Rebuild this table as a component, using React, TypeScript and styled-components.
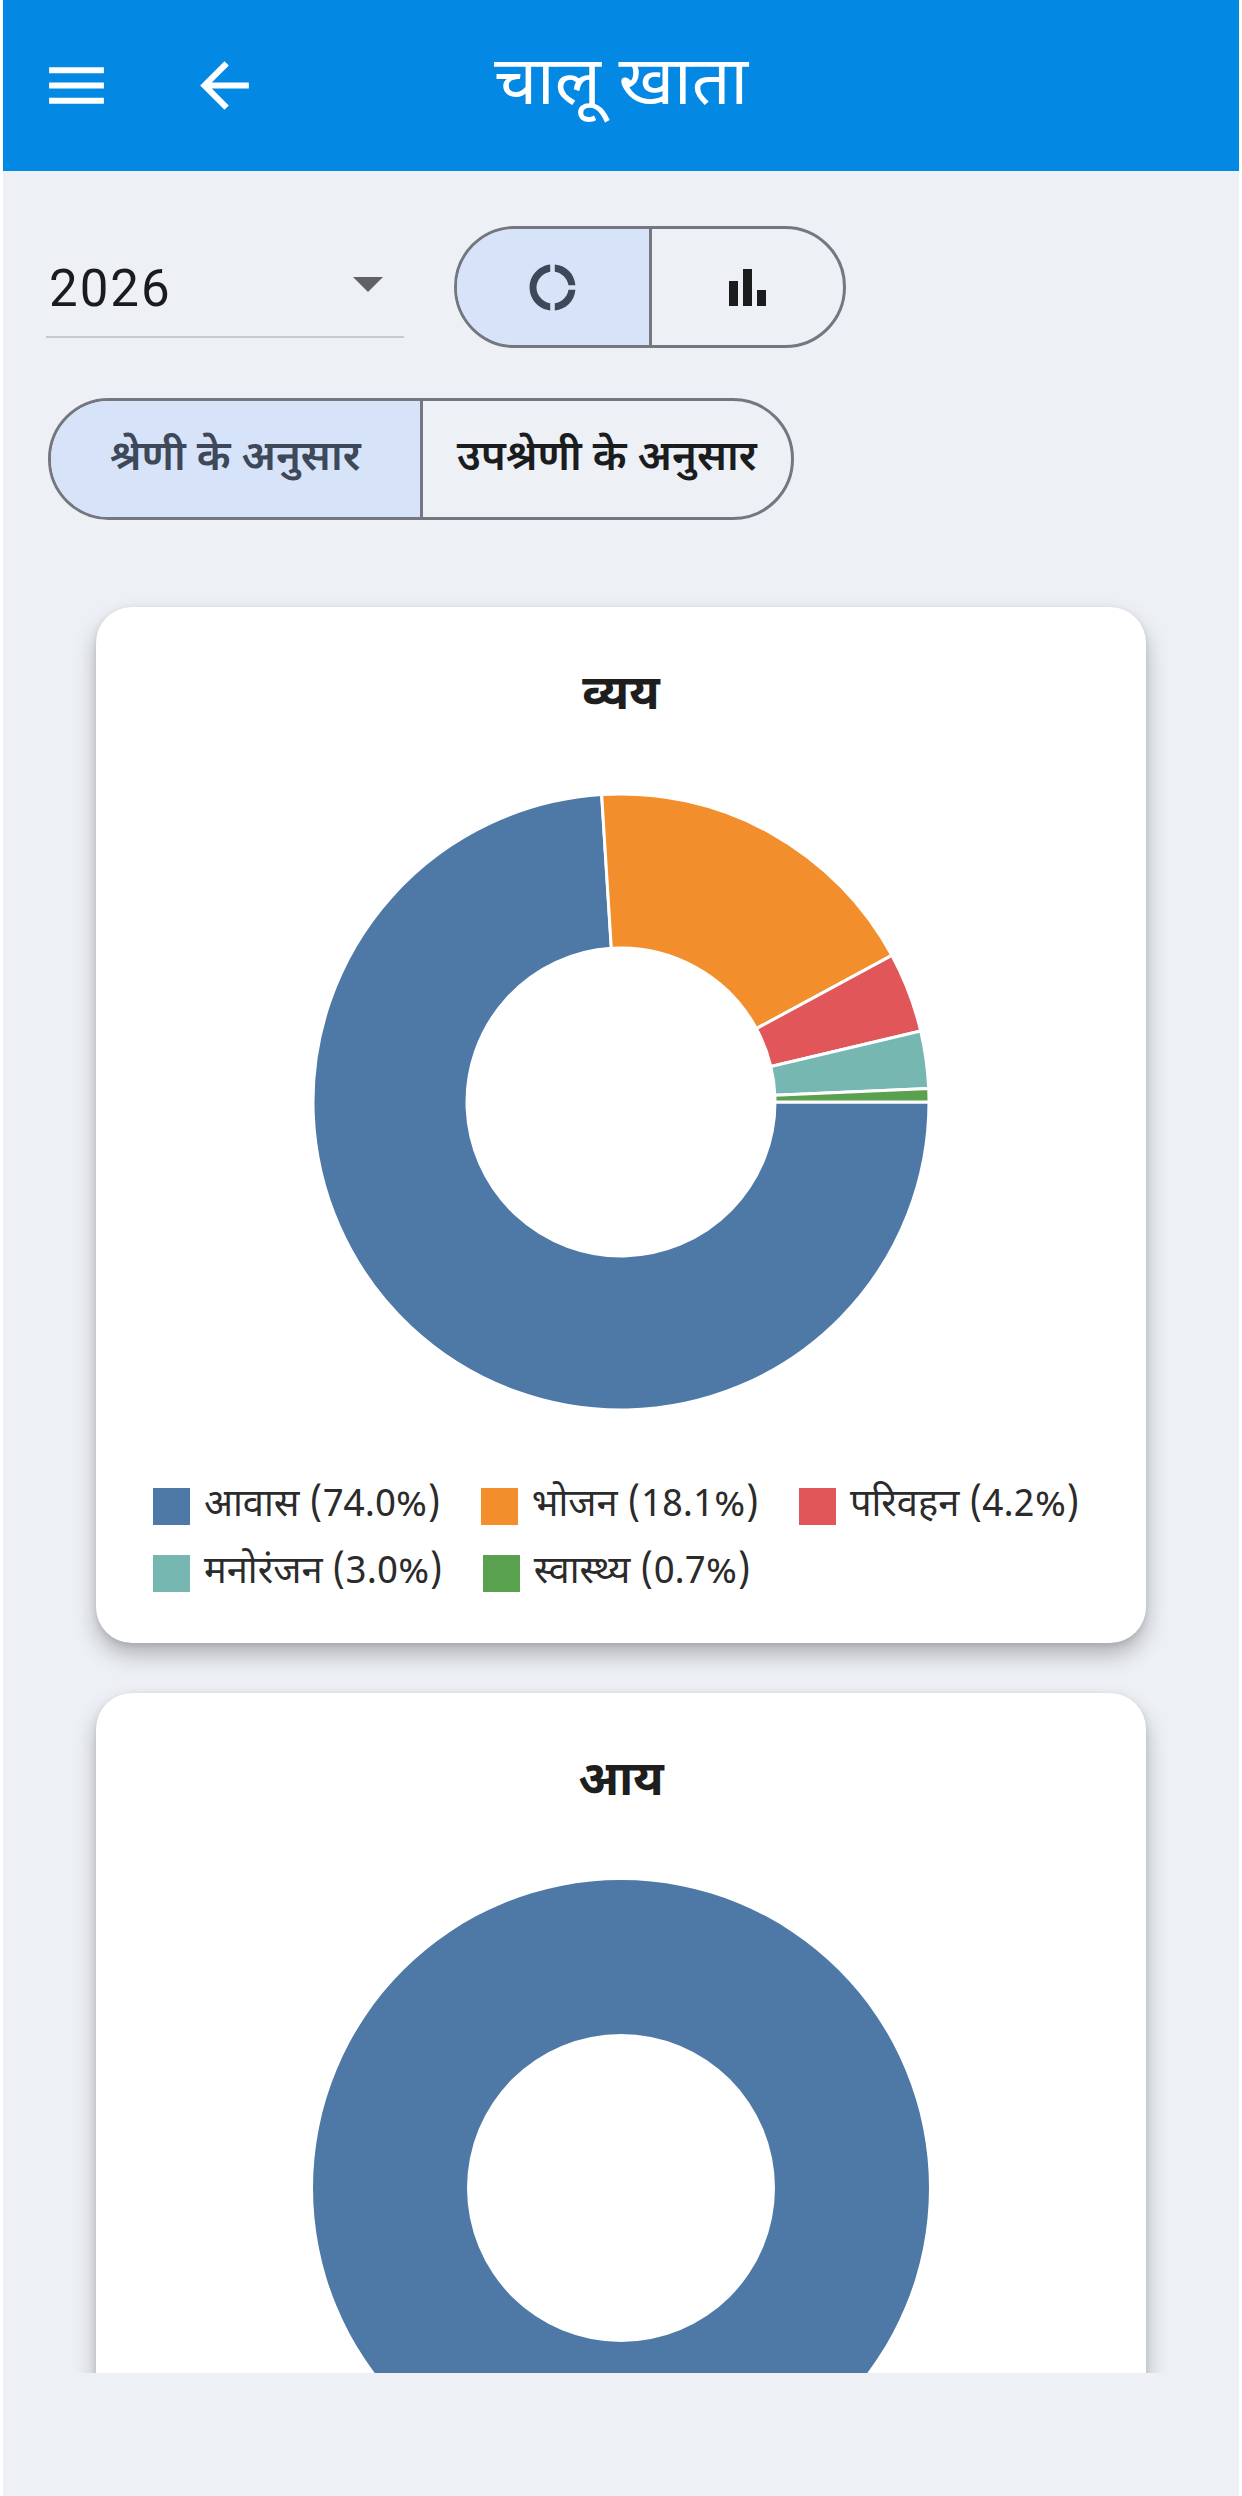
import React from "react";
import styled, { createGlobalStyle } from "styled-components";

const Global = createGlobalStyle`
  html, body { margin: 0; padding: 0; background: #ffffff; }
  * { box-sizing: border-box; }
`;

const DEVA = `"Noto Sans Devanagari", "Noto Sans", "Lohit Devanagari", "FreeSans", sans-serif`;

const Frame = styled.div`
  width: 1236px;
  height: 2496px;
  margin-left: 3px;
  background: #edf0f5;
  display: flex;
  flex-direction: column;
  overflow: hidden;
  font-family: ${DEVA};
`;

const AppBar = styled.header`
  height: 171px;
  flex: none;
  background: #0388e4;
  display: grid;
  grid-template-columns: 1fr auto 1fr;
  align-items: center;
  padding: 0 37px;
`;

const BarLeft = styled.div`
  display: flex;
  align-items: center;
  gap: 75px;
`;

const IconBox = styled.div`
  width: 73px;
  height: 73px;
  display: flex;
  align-items: center;
  justify-content: center;
  color: #ffffff;
`;

const Title = styled.h1`
  margin: 0;
  color: #ffffff;
  font-family: ${DEVA};
  font-weight: 400;
  font-size: 68px;
  line-height: 1;
  padding-top: 4px;
`;

const Content = styled.main`
  height: 2202px;
  flex: none;
  overflow: hidden;
  padding: 55px 43px 0 43px;
  display: flex;
  flex-direction: column;
`;

const ControlsRow = styled.div`
  display: flex;
  align-items: flex-start;
  gap: 50px;
`;

const YearSelect = styled.div`
  width: 358px;
  height: 112px;
  border-bottom: 2px solid #c8c9cc;
  display: flex;
  align-items: center;
  justify-content: space-between;
  padding: 14px 21px 0 3px;
  font-family: Roboto, "Liberation Sans", sans-serif;
  font-size: 51px;
  letter-spacing: 2px;
  color: #1b1b1f;
`;

const Caret = styled.div`
  width: 0;
  height: 0;
  border-left: 15px solid transparent;
  border-right: 15px solid transparent;
  border-top: 15px solid #606164;
  margin-top: -8px;
`;

const Segmented = styled.div<{ $width: number }>`
  width: ${(p) => p.$width}px;
  height: 122px;
  display: flex;
  border: 3px solid #74777f;
  border-radius: 61px;
  overflow: hidden;
`;

const Segment = styled.div<{ $selected?: boolean }>`
  flex: 1 1 0;
  display: flex;
  align-items: center;
  justify-content: center;
  background: ${(p) => (p.$selected ? "#d7e3f8" : "transparent")};
  color: ${(p) => (p.$selected ? "#3d4858" : "#1a1c1e")};
  font-family: ${DEVA};
  font-size: 42px;
  font-weight: 600;
  & + & {
    border-left: 3px solid #74777f;
  }
`;

const SecondRow = styled.div`
  margin-top: 50px;
  margin-left: 2px;
`;

const Card = styled.section<{ $first?: boolean }>`
  width: 1050px;
  flex: none;
  align-self: center;
  margin-top: ${(p) => (p.$first ? 87 : 50)}px;
  background: #ffffff;
  border-radius: 36px;
  box-shadow: 0 12px 22px rgba(0, 0, 0, 0.26), 0 2px 6px rgba(0, 0, 0, 0.1);
  padding: 58px 57px 51px 57px;
  display: flex;
  flex-direction: column;
  align-items: stretch;
`;

const CardTitle = styled.h2`
  margin: 0;
  text-align: center;
  font-family: ${DEVA};
  font-weight: 700;
  font-size: 48px;
  line-height: 66px;
  color: #1e1e1e;
`;

const ChartWrap = styled.div`
  margin-top: 60px;
  display: flex;
  justify-content: center;
`;

const Legend = styled.div`
  margin-top: 75px;
  display: flex;
  flex-wrap: wrap;
  column-gap: 40px;
  row-gap: 30px;
`;

const LegendItem = styled.div`
  display: flex;
  align-items: center;
  gap: 14px;
  height: 37px;
  font-family: ${DEVA};
  font-size: 38px;
  color: #2b2b2b;
  white-space: nowrap;
`;

const Swatch = styled.span<{ $color: string }>`
  width: 37px;
  height: 37px;
  flex: none;
  background: ${(p) => p.$color};
`;

const MenuIcon = () => (
  <svg width="73" height="73" viewBox="0 0 24 24" fill="currentColor">
    <path d="M3 18h18v-2H3v2zm0-5h18v-2H3v2zm0-7v2h18V6H3z" />
  </svg>
);

const BackIcon = () => (
  <svg width="73" height="73" viewBox="0 0 24 24" fill="currentColor">
    <path d="M20 11H7.83l5.59-5.59L12 4l-8 8 8 8 1.41-1.41L7.83 13H20v-2z" />
  </svg>
);

const DonutIcon = () => (
  <svg width="55" height="55" viewBox="0 0 24 24" fill="#3d4858">
    <path d="M11 5.08V2c-5 .5-9 4.81-9 10s4 9.5 9 10v-3.08c-3-.48-6-3.4-6-6.92s3-6.44 6-6.920zM18.97 11H22c-.47-5-4-8.53-9-9v3.08C16 5.51 18.540 8 18.97 11zM13 18.92V22c5-.47 8.53-4 9-9h-3.03c-.43 3-2.97 5.49-5.97 5.92z" />
  </svg>
);

const BarIcon = () => (
  <svg width="37" height="37" viewBox="0 0 37 37" fill="#1a1c1e">
    <rect x="0" y="12" width="9" height="25" />
    <rect x="14" y="0" width="9" height="37" />
    <rect x="28" y="21" width="9" height="16" />
  </svg>
);

type Slice = { label: string; value: number; color: string };

const expenses: Slice[] = [
  { label: "आवास", value: 74.0, color: "#4e79a7" },
  { label: "भोजन", value: 18.1, color: "#f28e2b" },
  { label: "परिवहन", value: 4.2, color: "#e15759" },
  { label: "मनोरंजन", value: 3.0, color: "#76b7b2" },
  { label: "स्वास्थ्य", value: 0.7, color: "#59a14f" },
];

const income: Slice[] = [{ label: "वेतन", value: 100, color: "#4e79a7" }];

const SIZE = 622;
const C = SIZE / 2;
const R = 308;
const RI = 154;

function pt(r: number, a: number) {
  const t = (a * Math.PI) / 180;
  return `${(C + r * Math.cos(t)).toFixed(2)} ${(C + r * Math.sin(t)).toFixed(2)}`;
}

function arc(a0: number, a1: number) {
  const large = a1 - a0 > 180 ? 1 : 0;
  return `M ${pt(R, a0)} A ${R} ${R} 0 ${large} 1 ${pt(R, a1)} L ${pt(RI, a1)} A ${RI} ${RI} 0 ${large} 0 ${pt(RI, a0)} Z`;
}

const Donut = ({ data }: { data: Slice[] }) => {
  const total = data.reduce((s, d) => s + d.value, 0);
  if (data.length === 1) {
    return (
      <svg width={SIZE} height={SIZE} viewBox={`0 0 ${SIZE} ${SIZE}`}>
        <path
          fillRule="evenodd"
          fill={data[0].color}
          d={`M ${C - R} ${C} a ${R} ${R} 0 1 0 ${2 * R} 0 a ${R} ${R} 0 1 0 ${-2 * R} 0 Z M ${C - RI} ${C} a ${RI} ${RI} 0 1 0 ${2 * RI} 0 a ${RI} ${RI} 0 1 0 ${-2 * RI} 0 Z`}
        />
      </svg>
    );
  }
  let acc = 0;
  return (
    <svg width={SIZE} height={SIZE} viewBox={`0 0 ${SIZE} ${SIZE}`}>
      {data.map((d) => {
        const a0 = (acc / total) * 360;
        acc += d.value;
        const a1 = (acc / total) * 360;
        return <path key={d.label} d={arc(a0, a1)} fill={d.color} stroke="#ffffff" strokeWidth={3} strokeLinejoin="round" />;
      })}
    </svg>
  );
};

export default function App() {
  return (
    <>
      <Global />
      <Frame>
        <AppBar>
          <BarLeft>
            <IconBox>
              <MenuIcon />
            </IconBox>
            <IconBox>
              <BackIcon />
            </IconBox>
          </BarLeft>
          <Title>चालू खाता</Title>
          <div />
        </AppBar>
        <Content>
          <ControlsRow>
            <YearSelect>
              <span>2026</span>
              <Caret />
            </YearSelect>
            <Segmented $width={392}>
              <Segment $selected>
                <DonutIcon />
              </Segment>
              <Segment>
                <BarIcon />
              </Segment>
            </Segmented>
          </ControlsRow>
          <SecondRow>
            <Segmented $width={746}>
              <Segment $selected>श्रेणी के अनुसार</Segment>
              <Segment>उपश्रेणी के अनुसार</Segment>
            </Segmented>
          </SecondRow>
          <Card $first>
            <CardTitle>व्यय</CardTitle>
            <ChartWrap>
              <Donut data={expenses} />
            </ChartWrap>
            <Legend>
              {expenses.map((d) => (
                <LegendItem key={d.label}>
                  <Swatch $color={d.color} />
                  <span>
                    {d.label} ({d.value.toFixed(1)}%)
                  </span>
                </LegendItem>
              ))}
            </Legend>
          </Card>
          <Card>
            <CardTitle>आय</CardTitle>
            <ChartWrap>
              <Donut data={income} />
            </ChartWrap>
          </Card>
        </Content>
      </Frame>
    </>
  );
}
